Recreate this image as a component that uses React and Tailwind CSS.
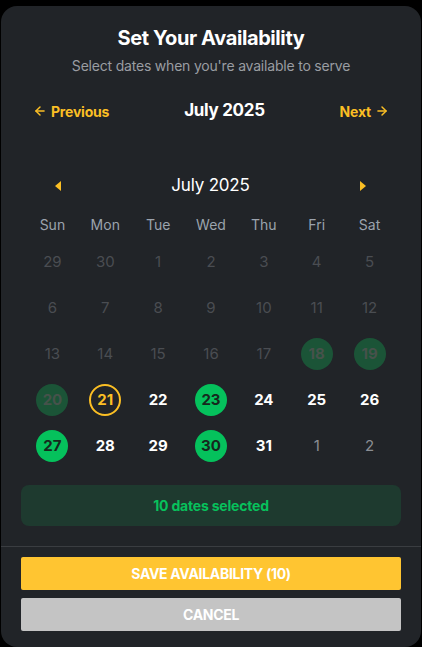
import React from 'react';
import { ArrowLeft, ArrowRight } from 'lucide-react';

const weekdays = ['Sun', 'Mon', 'Tue', 'Wed', 'Thu', 'Fri', 'Sat'];

// kind: past | pastSel | today | day | sel | next
const days = [
  [29, 'past'], [30, 'past'], [1, 'past'], [2, 'past'], [3, 'past'], [4, 'past'], [5, 'past'],
  [6, 'past'], [7, 'past'], [8, 'past'], [9, 'past'], [10, 'past'], [11, 'past'], [12, 'past'],
  [13, 'past'], [14, 'past'], [15, 'past'], [16, 'past'], [17, 'past'], [18, 'pastSel'], [19, 'pastSel'],
  [20, 'pastSel'], [21, 'today'], [22, 'day'], [23, 'sel'], [24, 'day'], [25, 'day'], [26, 'day'],
  [27, 'sel'], [28, 'day'], [29, 'day'], [30, 'sel'], [31, 'day'], [1, 'next'], [2, 'next'],
];

const dayStyles = {
  past: 'text-[#4a4d52]',
  pastSel: 'bg-[#1b5437] text-[#46524b] font-bold',
  today: 'border-2 border-[#fbbf24] text-[#fbbf24] font-bold',
  day: 'text-white font-bold',
  sel: 'bg-[#05c15c] text-[#16281d] font-bold',
  next: 'text-[#8b8e93]',
};

function Triangle({ dir }) {
  return (
    <svg width="6" height="10" viewBox="0 0 6 10">
      {dir === 'left'
        ? <path d="M6 0 L0 5 L6 10 Z" fill="#fbbf24" />
        : <path d="M0 0 L6 5 L0 10 Z" fill="#fbbf24" />}
    </svg>
  );
}

export default function App() {
  return (
    <div className="h-[647px] bg-black pt-[6px] px-px" style={{ fontFamily: 'Inter, "Noto Sans", sans-serif' }}>
      <div className="h-[641px] bg-[#212428] rounded-2xl flex flex-col">
        <div className="px-5 pt-[18px]">
          <h1 className="text-center text-white text-[20px] leading-7 font-bold tracking-[-0.4px]">Set Your Availability</h1>
          <p className="mt-1 text-center text-[#9a9da2] text-[14px] leading-5 tracking-[-0.2px]">
            Select dates when you're available to serve
          </p>

          <div className="mt-[23px] flex items-center justify-between px-3 h-6">
            <button className="flex items-center gap-1 text-[#fbbf24] text-[14px] font-bold tracking-[-0.2px]">
              <ArrowLeft className="w-[14px] h-[14px]" strokeWidth={2.5} />
              Previous
            </button>
            <span className="text-white text-[17px] font-bold tracking-[-0.3px]">July 2025</span>
            <button className="flex items-center gap-1 text-[#fbbf24] text-[14px] font-bold tracking-[-0.2px]">
              Next
              <ArrowRight className="w-[14px] h-[14px]" strokeWidth={2.5} />
            </button>
          </div>

          <div className="mt-[51px] px-[5px]">
            <div className="flex items-center justify-between h-6 pl-[29px] pr-[30px]">
              <Triangle dir="left" />
              <span className="text-white text-[17px] tracking-[-0.2px]">July 2025</span>
              <Triangle dir="right" />
            </div>

            <div className="mt-[17px] grid grid-cols-7">
              {weekdays.map(d => (
                <div key={d} className="text-center text-[#9ba3ad] text-[14px] leading-5">{d}</div>
              ))}
            </div>

            <div className="mt-1 grid grid-cols-7">
              {days.map(([n, kind], i) => (
                <div key={i} className="h-[46px] flex items-center justify-center">
                  <div className={`w-8 h-8 rounded-full flex items-center justify-center text-[15px] ${dayStyles[kind]}`}>
                    {n}
                  </div>
                </div>
              ))}
            </div>
          </div>

          <div className="mt-4 h-[41px] rounded-lg bg-[#1e3a2f] flex items-center justify-center">
            <span className="text-[#07c15c] text-[14px] font-bold tracking-[-0.2px]">10 dates selected</span>
          </div>
        </div>

        <div className="mt-5 border-t border-[#3a3d41] px-5 pt-[10px] flex flex-col gap-2">
          <button className="h-[33px] bg-[#ffc531] text-white text-[14px] font-bold tracking-[-0.3px] rounded-[2px]">
            SAVE AVAILABILITY (10)
          </button>
          <button className="h-[33px] bg-[#c4c4c4] text-white text-[14px] font-bold tracking-[-0.3px] rounded-[2px]">
            CANCEL
          </button>
        </div>
      </div>
    </div>
  );
}
